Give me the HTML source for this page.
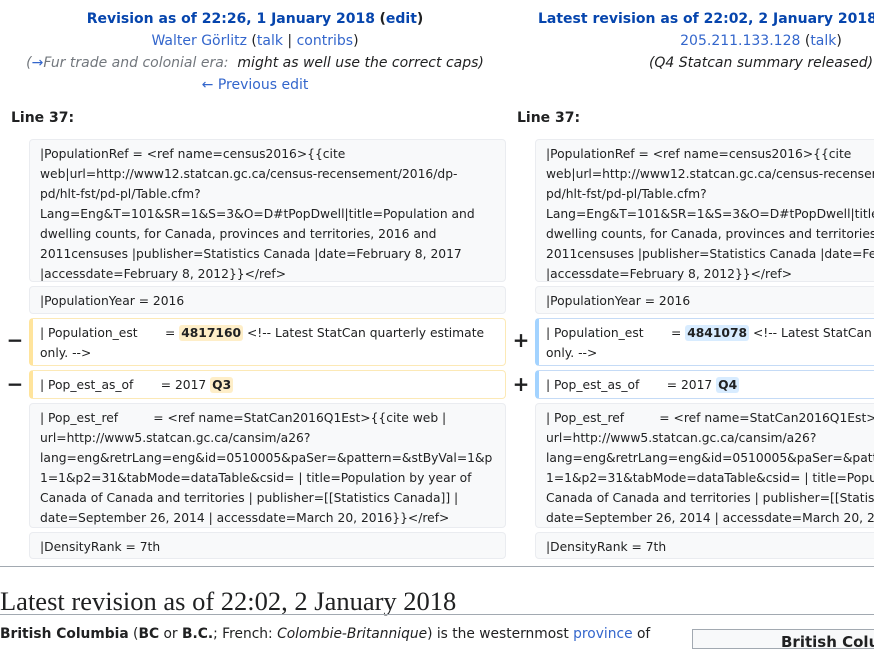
<!DOCTYPE html>
<html><head><meta charset="utf-8"><style>
html,body{margin:0;padding:0;width:874px;height:643px;overflow:hidden;background:#fff;font-family:"DejaVu Sans",sans-serif;color:#202122;}
.a{position:absolute;white-space:nowrap}
.c{text-align:center;font-size:14px;line-height:22px}
a,.l{color:#3366cc;text-decoration:none}
.t{color:#0645ad;font-weight:bold}
.box{position:absolute;box-sizing:border-box;background:#f8f9fa;border:1px solid #eaecf0;border-radius:4px;font-size:12.3px;line-height:20px;padding:4px 10px 3px 10px;white-space:pre-wrap;overflow-wrap:anywhere;overflow:hidden}
.del{background:#fff;border:1px solid #fce9b6;border-left:4px solid #ffe49c;padding-left:7px}
.add{background:#fff;border:1px solid #c5dbf6;border-left:4px solid #a3d3ff;padding-left:7px}
.hd{background:#feeec8;font-weight:bold;border-radius:3px;padding:1px 2px}
.ha{background:#d8ecff;font-weight:bold;border-radius:3px;padding:1px 2px}
.m{position:absolute;font-size:20px;font-weight:bold;width:20px;text-align:center}
.ln{font-weight:bold;font-size:14px}
</style></head><body>
<div class="a c" style="left:0;width:510px;top:8px">
<span class="t">Revision as of 22:26, 1 January 2018</span> <b>(<span class="t">edit</span>)</b><br>
<span class="l">Walter Görlitz</span> (<span class="l">talk</span> | <span class="l">contribs</span>)<br>
<i style="color:#72777d">(<span class="l">→</span>Fur trade and colonial era: &nbsp;<span style="color:#202122">might as well use the correct caps)</span></i><br>
<span class="l">← Previous edit</span>
</div>
<div class="a c" style="left:538px;top:8px"><span class="t">Latest revision as of 22:02, 2 January 2018</span> <b>(<span class="t">edit</span>)</b></div>
<div class="a c" style="left:507px;width:508px;top:30px">
<span class="l">205.211.133.128</span> (<span class="l">talk</span>)<br>
<i>(Q4 Statcan summary released)</i>
</div>
<div class="a ln" style="left:11px;top:110px">Line 37:</div>
<div class="a ln" style="left:517px;top:110px">Line 37:</div>

<div class="box" style="left:29px;top:139px;width:477px;height:143px">|PopulationRef = &lt;ref name=census2016&gt;{{cite web|url=http://www12.statcan.gc.ca/census-recensement/2016/dp-pd/hlt-fst/pd-pl/Table.cfm?Lang=Eng&amp;T=101&amp;SR=1&amp;S=3&amp;O=D#tPopDwell|title=Population and dwelling counts, for Canada, provinces and territories, 2016 and 2011censuses |publisher=Statistics Canada |date=February 8, 2017 |accessdate=February 8, 2012}}&lt;/ref&gt;</div>
<div class="box" style="left:29px;top:286px;width:477px;height:28px">|PopulationYear = 2016</div>
<div class="box del" style="left:29px;top:318px;width:477px;height:48px">| Population_est       = <span class="hd">4817160</span> &lt;!-- Latest StatCan quarterly estimate only. --&gt;</div>
<div class="box del" style="left:29px;top:370px;width:477px;height:29px">| Pop_est_as_of       = 2017 <span class="hd">Q3</span></div>
<div class="box" style="left:29px;top:403px;width:477px;height:125px">| Pop_est_ref         = &lt;ref name=StatCan2016Q1Est&gt;{{cite web | url=http://www5.statcan.gc.ca/cansim/a26?lang=eng&amp;retrLang=eng&amp;id=0510005&amp;paSer=&amp;pattern=&amp;stByVal=1&amp;p1=1&amp;p2=31&amp;tabMode=dataTable&amp;csid= | title=Population by year of Canada of Canada and territories | publisher=[[Statistics Canada]] | date=September 26, 2014 | accessdate=March 20, 2016}}&lt;/ref&gt;</div>
<div class="box" style="left:29px;top:532px;width:477px;height:27px">|DensityRank = 7th</div>

<div class="box" style="left:535px;top:139px;width:477px;height:143px">|PopulationRef = &lt;ref name=census2016&gt;{{cite web|url=http://www12.statcan.gc.ca/census-recensement/2016/dp-pd/hlt-fst/pd-pl/Table.cfm?Lang=Eng&amp;T=101&amp;SR=1&amp;S=3&amp;O=D#tPopDwell|title=Population and dwelling counts, for Canada, provinces and territories, 2016 and 2011censuses |publisher=Statistics Canada |date=February 8, 2017 |accessdate=February 8, 2012}}&lt;/ref&gt;</div>
<div class="box" style="left:535px;top:286px;width:477px;height:28px">|PopulationYear = 2016</div>
<div class="box add" style="left:535px;top:318px;width:477px;height:48px">| Population_est       = <span class="ha">4841078</span> &lt;!-- Latest StatCan quarterly estimate only. --&gt;</div>
<div class="box add" style="left:535px;top:370px;width:477px;height:29px">| Pop_est_as_of       = 2017 <span class="ha">Q4</span></div>
<div class="box" style="left:535px;top:403px;width:477px;height:125px">| Pop_est_ref         = &lt;ref name=StatCan2016Q1Est&gt;{{cite web | url=http://www5.statcan.gc.ca/cansim/a26?lang=eng&amp;retrLang=eng&amp;id=0510005&amp;paSer=&amp;pattern=&amp;stByVal=1&amp;p1=1&amp;p2=31&amp;tabMode=dataTable&amp;csid= | title=Population by year of Canada of Canada and territories | publisher=[[Statistics Canada]] | date=September 26, 2014 | accessdate=March 20, 2016}}&lt;/ref&gt;</div>
<div class="box" style="left:535px;top:532px;width:477px;height:27px">|DensityRank = 7th</div>

<div class="m" style="left:5px;top:328px">−</div>
<div class="m" style="left:5px;top:372px">−</div>
<div class="m" style="left:511px;top:328px">+</div>
<div class="m" style="left:511px;top:372px">+</div>

<div class="a" style="left:0;top:566px;width:874px;height:1px;background:#a2a9b1"></div>
<div class="a" style="left:0;top:585px;font-family:'Liberation Serif',serif;font-size:26.5px;line-height:32px">Latest revision as of 22:02, 2 January 2018</div>
<div class="a" style="left:0;top:614px;width:874px;height:1px;background:#a2a9b1"></div>
<div class="a" style="left:0;top:624px;font-size:13.8px;line-height:20px"><b>British Columbia</b> (<b>BC</b> or <b>B.C.</b>; French: <i>Colombie-Britannique</i>) is the westernmost <span class="l">province</span> of</div>
<div class="a" style="left:692px;top:629px;width:200px;height:20px;box-sizing:border-box;border:1px solid #a2a9b1;background:#f8f9fa;font-weight:bold;font-size:15px;padding:3px 0 0 88px">British Columbia</div>
</body></html>
